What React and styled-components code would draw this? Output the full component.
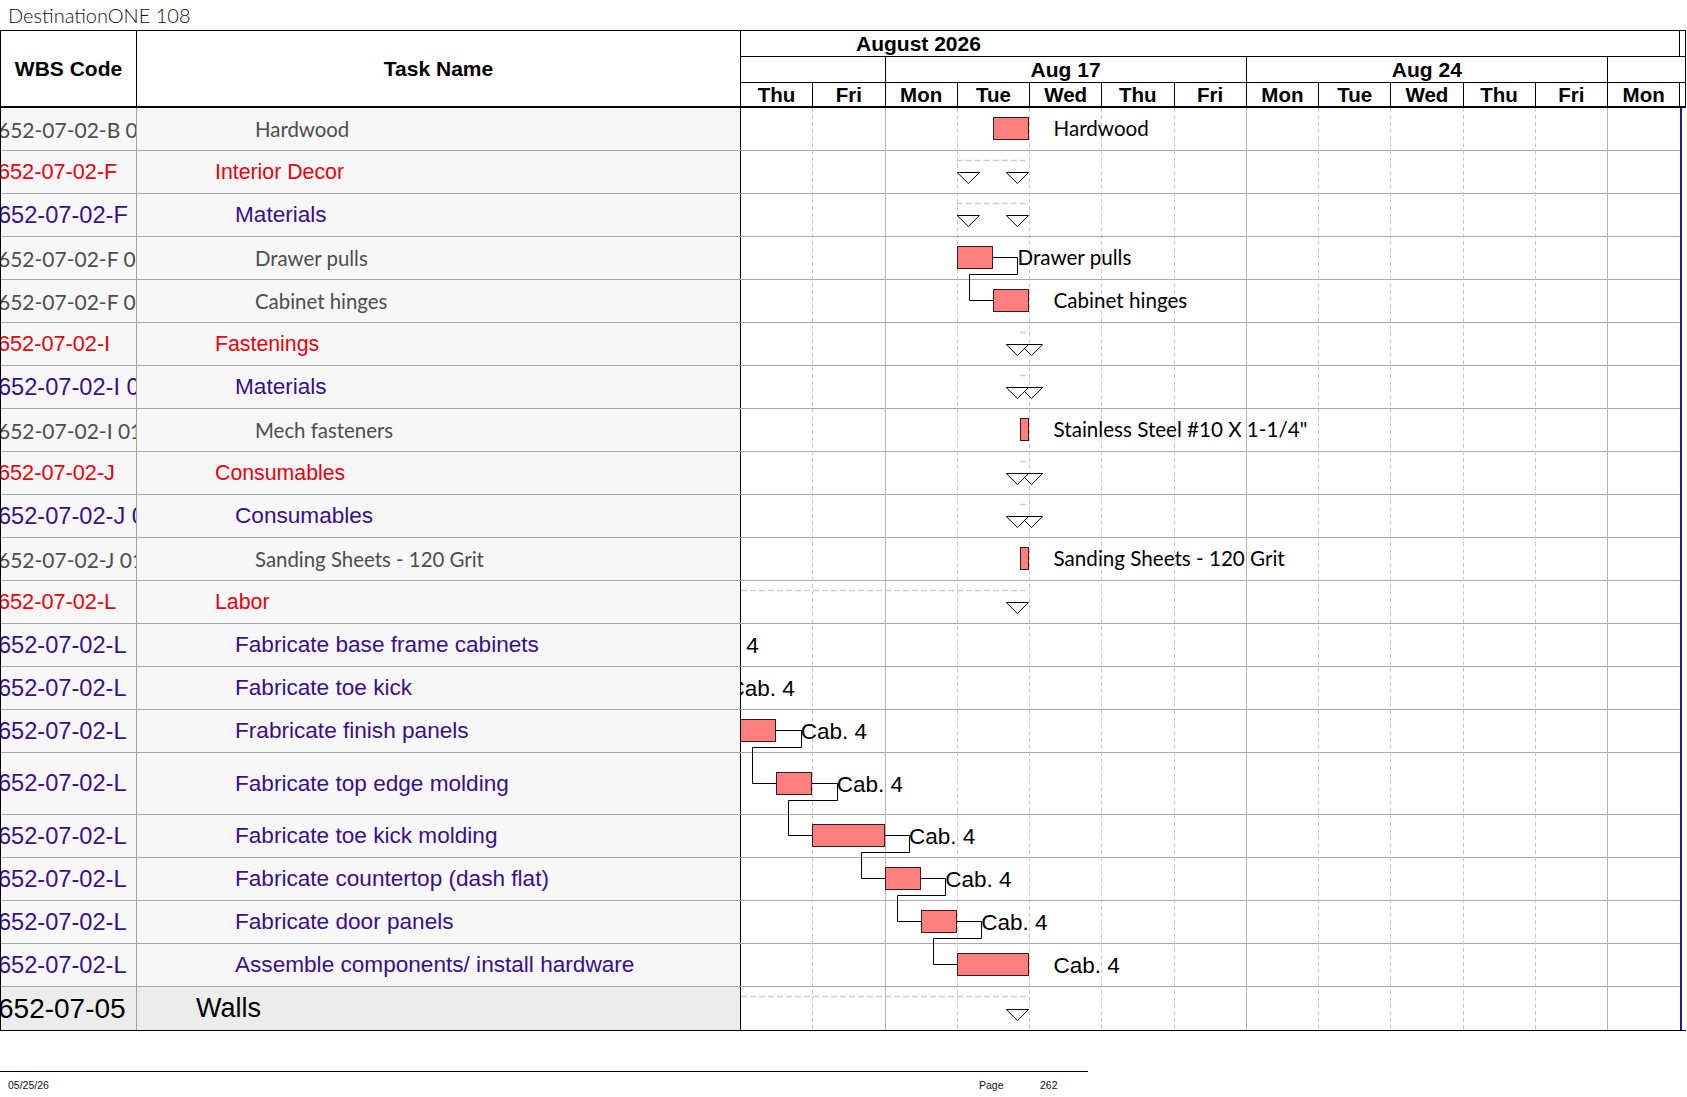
import React from "react";
import styled, { createGlobalStyle, css } from "styled-components";

const ARIAL = '"Liberation Sans", Arial, sans-serif';
const LATO = 'Lato, "Open Sans", sans-serif';

const GlobalStyle = createGlobalStyle`
  html, body { margin: 0; padding: 0; background: #fff; }
  body { font-family: ${ARIAL}; }
  *, *::before, *::after { box-sizing: border-box; }
`;

const DAY = 72.25;
const dx = (d) => -1 + d * DAY;
const px = (v) => Math.round(v) + 0.5;

const KIND = {
  grey: { font: LATO, size: 20.4, wbsSize: 21, color: "#4d4d4d", pad: 118 },
  red: { font: ARIAL, size: 21.3, wbsSize: 21.7, color: "#e8000d", pad: 78 },
  purple: { font: ARIAL, size: 22.6, wbsSize: 23.6, color: "#3a0f8c", pad: 98 },
  walls: { font: ARIAL, size: 27, wbsSize: 28, color: "#000", pad: 59 },
};

const kindText = ({ $kind, $wbs }) => css`
  font-family: ${KIND[$kind].font};
  font-size: ${$wbs ? KIND[$kind].wbsSize : KIND[$kind].size}px;
  color: ${KIND[$kind].color};
`;

const Page = styled.div`
  width: 1687px;
  height: 1097px;
  overflow: hidden;
`;

const Title = styled.div`
  height: 30px;
  padding-left: 8px;
  display: flex;
  align-items: center;
  font-family: ${LATO};
  font-weight: 300;
  font-size: 20px;
  color: #111;
`;

const Table = styled.div`
  width: 1686px;
  border-top: 1px solid #000;
  border-left: 1px solid #000;
  border-bottom: 1px solid #000;
`;

const Header = styled.div`
  display: grid;
  grid-template-columns: 136px 604px 945px;
  height: 77px;
  border-bottom: 2px solid #000;
  background: #fff;
`;

const HeadCell = styled.div`
  display: flex;
  align-items: center;
  justify-content: center;
  border-right: 1px solid #000;
  font-family: ${ARIAL};
  font-weight: 700;
  font-size: 21px;
  color: #000;
`;

const Timescale = styled.div`
  display: flex;
  flex-direction: column;
  border-right: 1px solid #000;
`;

const MonthTier = styled.div`
  height: 26px;
  display: flex;
  border-bottom: 1px solid #000;
`;

const MonthCell = styled.div`
  width: 939.25px;
  border-right: 1px solid #000;
  padding-left: 115px;
  display: flex;
  align-items: center;
  font-weight: 700;
  font-size: 21px;
  color: #000;
`;

const Tier = styled.div`
  height: ${(p) => p.$h}px;
  display: grid;
  grid-template-columns: repeat(13, 72.25px) 1fr;
  border-bottom: ${(p) => (p.$divider ? "1px solid #000" : "none")};
`;

const TierCell = styled.div`
  grid-column: span ${(p) => p.$span || 1};
  border-right: ${(p) => (p.$open ? "none" : "1px solid #000")};
  display: flex;
  align-items: center;
  justify-content: center;
  font-weight: 700;
  font-size: ${(p) => (p.$small ? 20.5 : 21)}px;
  color: #000;
  white-space: nowrap;
  overflow: hidden;
`;

const Body = styled.div`
  display: flex;
`;

const RowList = styled.div`
  width: 740px;
  display: flex;
  flex-direction: column;
`;

const Row = styled.div`
  display: grid;
  grid-template-columns: 136px 604px;
  height: ${(p) => p.$h}px;
  border-bottom: ${(p) => (p.$last ? "none" : "1px solid #a8a8a8")};
  background: ${(p) => (p.$kind === "walls" ? "#ececec" : "#f7f7f7")};
`;

const WbsCell = styled.div`
  display: flex;
  align-items: center;
  overflow: hidden;
  white-space: nowrap;
  border-right: 1px solid #a0a0a0;
  ${kindText}
`;

const WbsText = styled.span`
  margin-left: -3px;
`;

const TaskCell = styled.div`
  display: flex;
  align-items: center;
  overflow: hidden;
  white-space: nowrap;
  border-right: 1px solid #000;
  padding-left: ${(p) => KIND[p.$kind].pad}px;
  ${kindText}
`;

const GanttCanvas = styled.div`
  width: 941px;
  border-right: 2px solid #1c1c8c;
  background: #fff;
`;

const ChartSvg = styled.svg`
  display: block;
`;

const RowLine = styled.line`
  stroke: #a8a8a8;
  stroke-width: 1;
`;

const GridLine = styled.line`
  stroke: ${(p) => (p.$solid ? "#b5b5b5" : "#c6c6c6")};
  stroke-width: 1;
  stroke-dasharray: ${(p) => (p.$solid ? "none" : "4 3")};
`;

const SummaryLine = styled.line`
  stroke: #cdcdcd;
  stroke-width: 1.5;
  stroke-dasharray: 6 3;
`;

const Marker = styled.polygon`
  fill: #fff;
  stroke: #000;
  stroke-width: 1;
`;

const Bar = styled.rect`
  fill: #ff7f7f;
  stroke: #3a1a1a;
  stroke-width: 1;
`;

const Link = styled.path`
  fill: none;
  stroke: #000;
  stroke-width: 1;
`;

const Label = styled.text`
  font-family: ${(p) => (p.$arial ? ARIAL : LATO)};
  font-size: ${(p) => (p.$arial ? 22.5 : 20.6)}px;
  fill: #000;
`;

const Footer = styled.div`
  width: 1088px;
  margin-top: 40px;
  border-top: 1px solid #000;
  display: flex;
  padding-top: 7px;
  font-family: ${ARIAL};
  font-size: 10.5px;
  line-height: 12px;
  color: #111;
`;

const FooterDate = styled.div`
  padding-left: 8px;
  width: 979px;
`;

const FooterPage = styled.div`
  width: 61px;
`;

const rows = [
  { wbs: "652-07-02-B 01", task: "Hardwood", kind: "grey", bar: [3.5, 4], label: "Hardwood" },
  { wbs: "652-07-02-F", task: "Interior Decor", kind: "red", sum: [3, 4] },
  { wbs: "652-07-02-F", task: "Materials", kind: "purple", sum: [3, 4] },
  { wbs: "652-07-02-F 01", task: "Drawer pulls", kind: "grey", bar: [3, 3.5], label: "Drawer pulls", link: true },
  { wbs: "652-07-02-F 02", task: "Cabinet hinges", kind: "grey", bar: [3.5, 4], label: "Cabinet hinges" },
  { wbs: "652-07-02-I", task: "Fastenings", kind: "red", sum: [3.875, 4] },
  { wbs: "652-07-02-I 01", task: "Materials", kind: "purple", sum: [3.875, 4] },
  { wbs: "652-07-02-I 01 01", task: "Mech fasteners", kind: "grey", bar: [3.875, 4], label: 'Stainless Steel #10 X 1-1/4"' },
  { wbs: "652-07-02-J", task: "Consumables", kind: "red", sum: [3.875, 4] },
  { wbs: "652-07-02-J 01", task: "Consumables", kind: "purple", sum: [3.875, 4] },
  { wbs: "652-07-02-J 01 01", task: "Sanding Sheets - 120 Grit", kind: "grey", bar: [3.875, 4], label: "Sanding Sheets - 120 Grit" },
  { wbs: "652-07-02-L", task: "Labor", kind: "red", sum: [-4, 4] },
  { wbs: "652-07-02-L", task: "Fabricate base frame cabinets", kind: "purple", bar: [-2, -1], label: "Cab. 4", arial: true, link: true },
  { wbs: "652-07-02-L", task: "Fabricate toe kick", kind: "purple", bar: [-1, -0.5], label: "Cab. 4", arial: true, link: true },
  { wbs: "652-07-02-L", task: "Frabricate finish panels", kind: "purple", bar: [-0.5, 0.5], label: "Cab. 4", arial: true, link: true },
  { wbs: "652-07-02-L", task: "Fabricate top edge molding", kind: "purple", h: 62, bar: [0.5, 1], label: "Cab. 4", arial: true, link: true },
  { wbs: "652-07-02-L", task: "Fabricate toe kick molding", kind: "purple", bar: [1, 2], label: "Cab. 4", arial: true, link: true },
  { wbs: "652-07-02-L", task: "Fabricate countertop (dash flat)", kind: "purple", bar: [2, 2.5], label: "Cab. 4", arial: true, link: true },
  { wbs: "652-07-02-L", task: "Fabricate door panels", kind: "purple", bar: [2.5, 3], label: "Cab. 4", arial: true, link: true },
  { wbs: "652-07-02-L", task: "Assemble components/ install hardware", kind: "purple", bar: [3, 4], label: "Cab. 4", arial: true },
  { wbs: "652-07-05", task: "Walls", kind: "walls", sum: [-4, 4], last: true },
];

const days = ["Thu", "Fri", "Mon", "Tue", "Wed", "Thu", "Fri", "Mon", "Tue", "Wed", "Thu", "Fri", "Mon"];

const CHART_W = 939;

let acc = 0;
const geo = rows.map((r) => {
  const h = r.h || 43;
  const contentH = r.last ? h : h - 1;
  const top = acc;
  acc += h;
  const cy = top + contentH / 2;
  const by = Math.floor(cy - 11.5);
  return { top, h, contentH, cy, by };
});
const CHART_H = acc;

function Chart() {
  return (
    <ChartSvg width={CHART_W} height={CHART_H} viewBox={`0 0 ${CHART_W} ${CHART_H}`}>
      {geo.map((g, i) =>
        rows[i].last ? null : (
          <RowLine key={`rl${i}`} x1={0} x2={CHART_W} y1={g.top + g.h - 0.5} y2={g.top + g.h - 0.5} />
        )
      )}
      {days.map((d, i) =>
        i === 0 ? null : (
          <GridLine
            key={`gl${i}`}
            $solid={d === "Mon"}
            x1={px(dx(i))}
            x2={px(dx(i))}
            y1={0}
            y2={CHART_H}
          />
        )
      )}
      {rows.map((r, i) => {
        if (!r.sum) return null;
        const g = geo[i];
        const xs = dx(r.sum[0]);
        const xe = dx(r.sum[1]);
        const t = Math.round(g.cy) + 0.5;
        const ly = g.top + 9.5;
        return (
          <g key={`s${i}`}>
            <SummaryLine x1={Math.max(xs, 0)} x2={xe} y1={ly} y2={ly} />
            <Marker points={`${xs + 0.5},${t} ${xs + 22.7},${t} ${xs + 11.6},${t + 11}`} />
            <Marker points={`${xe - 22.7},${t} ${xe - 0.5},${t} ${xe - 11.6},${t + 11}`} />
          </g>
        );
      })}
      {rows.map((r, i) => {
        if (!r.bar) return null;
        const g = geo[i];
        const x0 = Math.round(dx(r.bar[0]));
        const x1 = Math.round(dx(r.bar[1]));
        const ly = g.by + 11.5;
        const lx = dx(r.bar[1]) + 24.6;
        let link = null;
        if (r.link) {
          const n = rows[i + 1];
          const ng = geo[i + 1];
          const nx = Math.round(dx(n.bar[0]));
          const turnY = g.by + 28.5;
          const nly = ng.by + 11.5;
          link = (
            <Link
              d={`M ${x1} ${ly} H ${px(lx)} V ${turnY} H ${nx - 24 + 0.5} V ${nly} H ${nx}`}
            />
          );
        }
        return (
          <g key={`b${i}`}>
            <Bar x={x0 + 0.5} y={g.by + 0.5} width={x1 - x0 - 1} height={22} />
            {link}
            <Label $arial={r.arial} x={lx} y={ly + (r.arial ? 8.5 : 7.8)}>
              {r.label}
            </Label>
          </g>
        );
      })}
    </ChartSvg>
  );
}

export default function App() {
  return (
    <Page>
      <GlobalStyle />
      <Title>DestinationONE 108</Title>
      <Table>
        <Header>
          <HeadCell>WBS Code</HeadCell>
          <HeadCell>Task Name</HeadCell>
          <Timescale>
            <MonthTier>
              <MonthCell>August 2026</MonthCell>
            </MonthTier>
            <Tier $h={26} $divider>
              <TierCell $span={2} />
              <TierCell $span={5}>Aug 17</TierCell>
              <TierCell $span={5}>Aug 24</TierCell>
              <TierCell $span={2} $open />
            </Tier>
            <Tier $h={23}>
              {days.map((d, i) => (
                <TierCell key={i} $small>
                  {d}
                </TierCell>
              ))}
              <TierCell $open />
            </Tier>
          </Timescale>
        </Header>
        <Body>
          <RowList>
            {rows.map((r, i) => (
              <Row key={i} $h={r.h || 43} $last={r.last} $kind={r.kind}>
                <WbsCell $kind={r.kind} $wbs>
                  <WbsText>{r.wbs}</WbsText>
                </WbsCell>
                <TaskCell $kind={r.kind}>{r.task}</TaskCell>
              </Row>
            ))}
          </RowList>
          <GanttCanvas>
            <Chart />
          </GanttCanvas>
        </Body>
      </Table>
      <Footer>
        <FooterDate>05/25/26</FooterDate>
        <FooterPage>Page</FooterPage>
        <div>262</div>
      </Footer>
    </Page>
  );
}
